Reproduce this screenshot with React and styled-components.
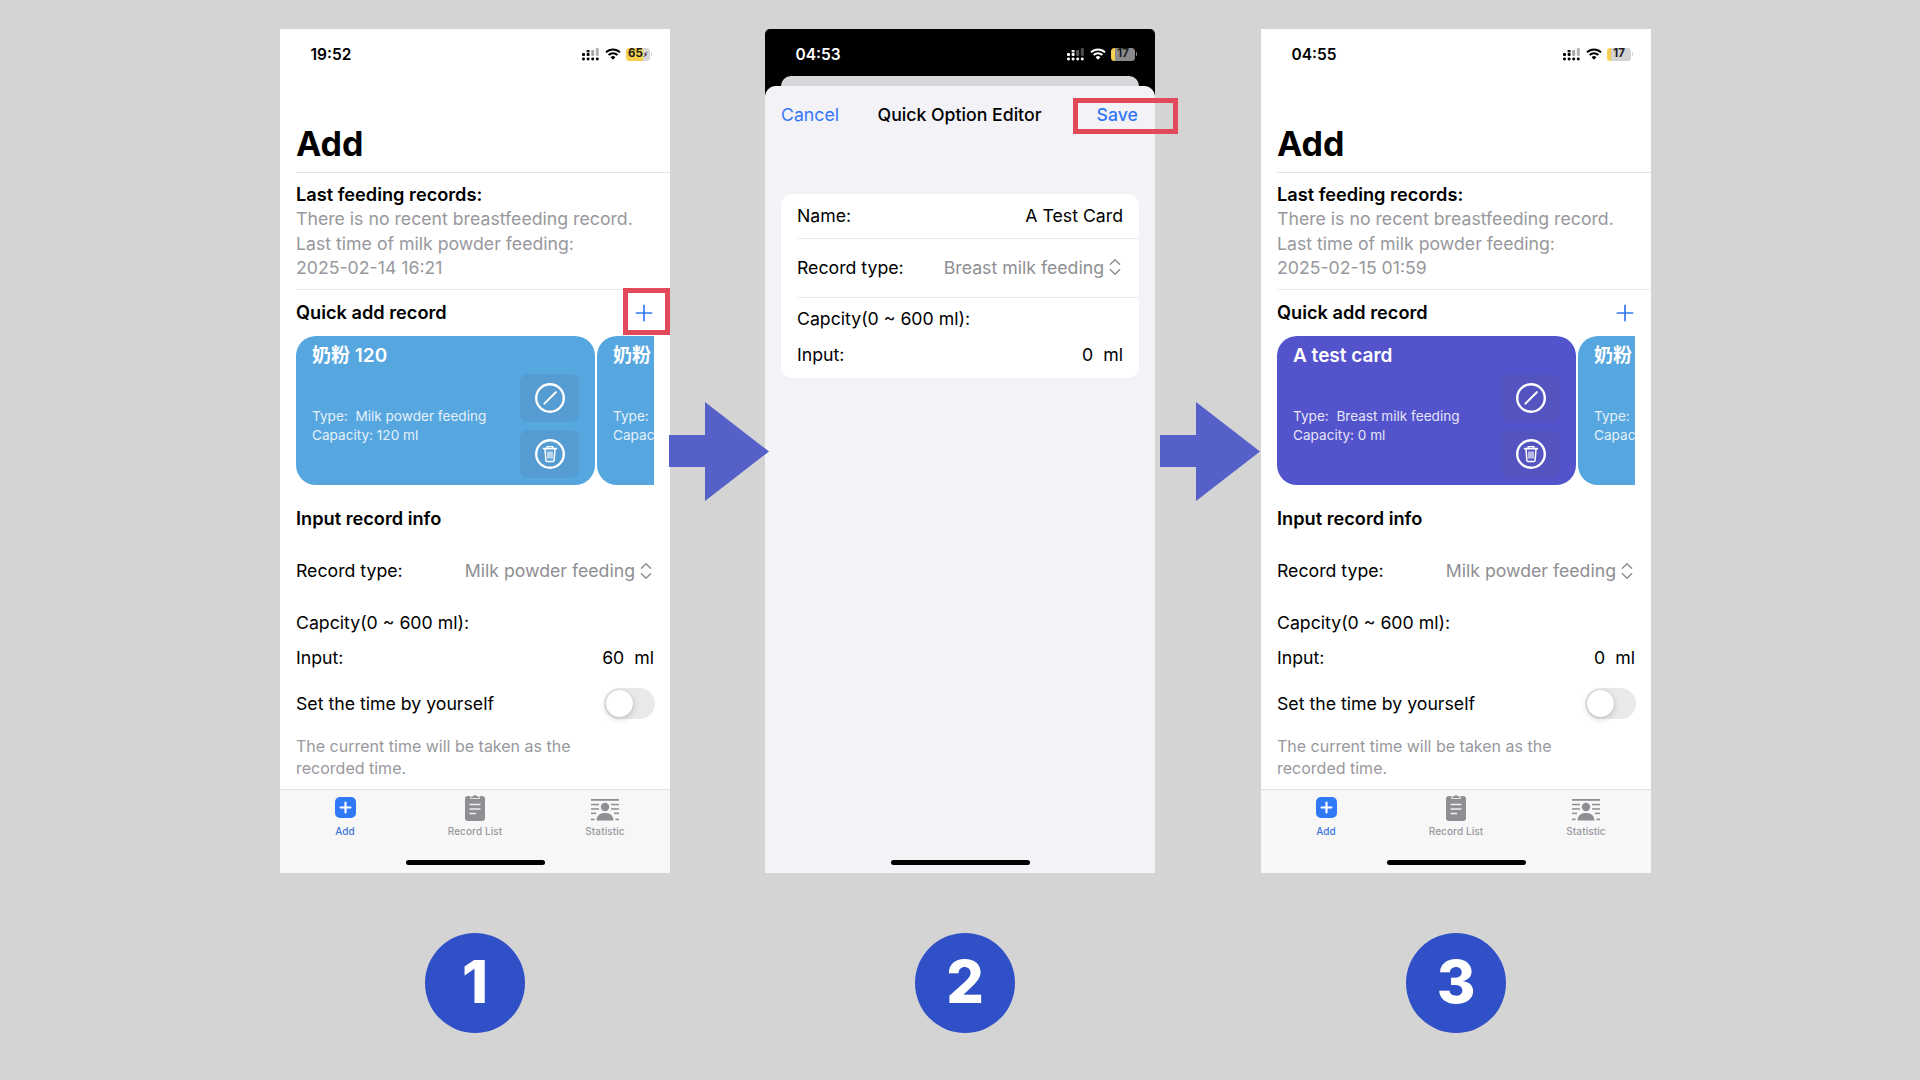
import styled, { createGlobalStyle } from 'styled-components'
import { Plus, ChevronsUpDown } from 'lucide-react'

export default function App() {
	return (
		<>
			<GlobalStyle />
			<Page>
				<Column>
					<AddScreen
						time="19:52"
						battery={{ label: '65', bolt: true, level: 72, track: '#d6d6d6' }}
						lastDate="2025-02-14 16:21"
						firstCard={{ name: '奶粉 120', type: 'Milk powder feeding', capacity: '120 ml', color: '#56a6e0' }}
						amount="60"
						highlight
					/>
					<Step>1</Step>
				</Column>
				<Gutter $width={95} $offset={-1}>
					<ArrowIcon />
				</Gutter>
				<Column>
					<EditorScreen />
					<Step $shift={10}>2</Step>
				</Column>
				<Gutter $width={106} $offset={5}>
					<ArrowIcon />
				</Gutter>
				<Column>
					<AddScreen
						time="04:55"
						battery={{ label: '17', level: 17, track: '#d2d2d2' }}
						lastDate="2025-02-15 01:59"
						firstCard={{ name: 'A test card', type: 'Breast milk feeding', capacity: '0 ml', color: '#5353cc' }}
						amount="0"
					/>
					<Step>3</Step>
				</Column>
			</Page>
		</>
	)
}

function AddScreen({ time, battery, lastDate, firstCard, amount, highlight }) {
	const secondCard = { name: '奶粉 120', type: 'Milk powder feeding', capacity: '120 ml', color: '#56a6e0' }

	return (
		<Phone>
			<StatusBar time={time} battery={battery} />
			<Content>
				<TitleBlock>
					<Title>Add</Title>
				</TitleBlock>
				<LastRecords>
					<Heading>Last feeding records:</Heading>
					<Muted>There is no recent breastfeeding record.</Muted>
					<Muted>Last time of milk powder feeding:</Muted>
					<Muted>{lastDate}</Muted>
				</LastRecords>
				<QuickHeader>
					<Heading>Quick add record</Heading>
					<AddButton>
						<Plus size={26} strokeWidth={1.6} />
					</AddButton>
					{highlight && <PlusHighlight />}
				</QuickHeader>
				<CardStrip>
					<QuickCard card={firstCard} />
					<QuickCard card={secondCard} />
				</CardStrip>
				<Row $height={42}>
					<Heading>Input record info</Heading>
				</Row>
				<Row $height={61}>
					<span>Record type:</span>
					<Picker>
						Milk powder feeding
						<ChevronsUpDown size={22} strokeWidth={1.6} />
					</Picker>
				</Row>
				<Row $height={43}>
					<span>Capcity(0 ~ 600 ml):</span>
				</Row>
				<Row $height={27}>
					<span>Input:</span>
					<Value>{amount}  ml</Value>
				</Row>
				<Row $height={64}>
					<span>Set the time by yourself</span>
					<Toggle />
				</Row>
				<Note>The current time will be taken as the recorded time.</Note>
			</Content>
			<TabBar>
				<Tabs>
					<Tab $active>
						<TabIconAdd />
						Add
					</Tab>
					<Tab>
						<TabIconList />
						Record List
					</Tab>
					<Tab>
						<TabIconStatistic />
						Statistic
					</Tab>
				</Tabs>
				<HomeBar />
			</TabBar>
		</Phone>
	)
}

function EditorScreen() {
	return (
		<Phone $dark>
			<StatusBar dark time="04:53" battery={{ label: '17', level: 17, track: '#8a8a8c' }} />
			<SheetPeek />
			<Sheet>
				<SheetHeader>
					<LinkText>Cancel</LinkText>
					<SheetTitle>Quick Option Editor</SheetTitle>
					<SaveText>Save</SaveText>
					<SaveHighlight />
				</SheetHeader>
				<FormCard>
					<FormRow $height={45} $line>
						<span>Name:</span>
						<span>A Test Card</span>
					</FormRow>
					<FormRow $height={59} $line>
						<span>Record type:</span>
						<Picker>
							Breast milk feeding
							<ChevronsUpDown size={22} strokeWidth={1.6} />
						</Picker>
					</FormRow>
					<FormRow $height={42}>
						<span>Capcity(0 ~ 600 ml):</span>
					</FormRow>
					<FormRow $height={31}>
						<span>Input:</span>
						<Value>0  ml</Value>
					</FormRow>
				</FormCard>
				<HomeBar />
			</Sheet>
		</Phone>
	)
}

function QuickCard({ card }) {
	return (
		<Card $color={card.color}>
			<CardInfo>
				<CardName>{card.name}</CardName>
				<CardMeta>
					<div>Type:  {card.type}</div>
					<div>Capacity: {card.capacity}</div>
				</CardMeta>
			</CardInfo>
			<CardActions>
				<CardAction>
					<EditIcon />
				</CardAction>
				<CardAction>
					<TrashIcon />
				</CardAction>
			</CardActions>
		</Card>
	)
}

function StatusBar({ time, battery, dark }) {
	return (
		<Status $dark={dark}>
			<Clock>{time}</Clock>
			<StatusIcons>
				<SignalIcon />
				<WifiIcon />
				<Battery $level={battery.level} $track={battery.track}>
					{battery.label}
					{battery.bolt && <Bolt>⚡︎</Bolt>}
				</Battery>
			</StatusIcons>
		</Status>
	)
}

function SignalIcon() {
	return (
		<svg width="18" height="13" viewBox="0 0 18 13" fill="currentColor">
			<rect x="0" y="5" width="3" height="3" rx="1" />
			<rect x="4.6" y="5" width="3" height="3" rx="1" />
			<rect x="4.6" y="2" width="3" height="2.4" opacity="0.9" />
			<rect x="9.2" y="2" width="3" height="6" rx="1" opacity="0.35" />
			<rect x="13.8" y="0" width="3" height="8" rx="1" opacity="0.3" />
			<rect x="0" y="9.5" width="3" height="3" rx="1.4" />
			<rect x="4.6" y="9.5" width="3" height="3" rx="1.4" />
			<rect x="9.2" y="9.5" width="3" height="3" rx="1.4" />
			<rect x="13.8" y="9.5" width="3" height="3" rx="1.4" />
		</svg>
	)
}

function WifiIcon() {
	return (
		<svg width="16" height="12" viewBox="0 0 16 12" fill="none" stroke="currentColor" strokeWidth="2">
			<path d="M1 4.4A10 10 0 0 1 15 4.4" />
			<path d="M3.6 7A6.3 6.3 0 0 1 12.4 7" />
			<path d="M8 11.8 5.6 9.2A3.4 3.4 0 0 1 10.4 9.2Z" fill="currentColor" stroke="none" />
		</svg>
	)
}

function EditIcon() {
	return (
		<svg width="32" height="32" viewBox="0 0 32 32" fill="none" stroke="#fff">
			<circle cx="16" cy="16" r="13.8" strokeWidth="2.4" />
			<path d="M10.4 21.6 20.8 11.2" strokeWidth="2" strokeLinecap="round" />
			<path d="M21.4 10.6 21.9 10.1" strokeWidth="2" strokeLinecap="round" />
		</svg>
	)
}

function TrashIcon() {
	return (
		<svg width="32" height="32" viewBox="0 0 32 32" fill="none" stroke="#fff">
			<circle cx="16" cy="16" r="13.8" strokeWidth="2.4" />
			<path d="M9.5 10.6H22.5" strokeWidth="1.6" strokeLinecap="round" />
			<path d="M13.2 10.4V8.6H18.8V10.4" strokeWidth="1.4" />
			<path d="M11 11 11.9 22.4C12 23 12.4 23.4 13 23.4H19C19.6 23.4 20 23 20.1 22.4L21 11" strokeWidth="1.5" />
			<path d="M14 13.6V20.6M16 13.6V20.6M18 13.6V20.6" strokeWidth="1.2" />
		</svg>
	)
}

function TabIconAdd() {
	return (
		<svg width="21" height="21" viewBox="0 0 21 21">
			<rect width="21" height="21" rx="5" fill="#2f78f6" />
			<path d="M10.5 5.6V15.4M5.6 10.5H15.4" stroke="#fff" strokeWidth="2.2" strokeLinecap="round" />
		</svg>
	)
}

function TabIconList() {
	return (
		<svg width="20" height="28" viewBox="0 0 20 28">
			<rect x="0" y="3" width="20" height="25" rx="3" fill="#8e8e93" />
			<path d="M5.5 5.5V3.2H7.8A2.4 2.4 0 0 1 12.2 3.2H14.5V5.5Z" fill="#8e8e93" stroke="#f7f7f8" strokeWidth="0.8" />
			<path d="M4.5 11.5H15.5M4.5 16H15.5M4.5 20.5H11" stroke="#f0f0f2" strokeWidth="1.5" />
		</svg>
	)
}

function TabIconStatistic() {
	return (
		<svg width="28" height="22" viewBox="0 0 28 22" fill="#8e8e93">
			<rect x="0" y="0" width="28" height="1.8" />
			<rect x="0" y="4.8" width="8" height="1.5" />
			<rect x="20" y="4.8" width="8" height="1.5" />
			<rect x="0" y="9.2" width="8" height="1.5" />
			<rect x="20" y="9.2" width="8" height="1.5" />
			<rect x="0" y="13.6" width="5" height="1.5" />
			<rect x="23" y="13.6" width="5" height="1.5" />
			<rect x="0" y="19.6" width="3.5" height="1.6" />
			<rect x="24.5" y="19.6" width="3.5" height="1.6" />
			<circle cx="14" cy="8" r="4.2" />
			<path d="M5.5 21.4C6 15.6 10 14 14 14C18 14 22 15.6 22.5 21.4Z" />
		</svg>
	)
}

function ArrowIcon() {
	return (
		<svg width="100" height="99" viewBox="0 0 100 99">
			<path d="M0 33H36V0L100 49.5 36 99V65H0Z" fill="#5560c9" />
		</svg>
	)
}

const GlobalStyle = createGlobalStyle`
	html, body {
		margin: 0;
		padding: 0;
		background: #d4d4d4;
	}

	body {
		font-family: Inter, 'Noto Sans CJK SC', sans-serif;
		color: #000;
	}
`

const Page = styled.div`
	display: flex;
	align-items: flex-start;
	width: 1920px;
	height: 1080px;
	box-sizing: border-box;
	padding: 29px 0 0 280px;
	overflow: hidden;
	background: #d4d4d4;
`

const Column = styled.div`
	display: flex;
	flex-direction: column;
	align-items: center;
	width: 390px;
`

const Gutter = styled.div`
	position: relative;
	z-index: 2;
	display: flex;
	align-items: flex-start;
	width: ${(p) => p.$width}px;
	padding-top: 373px;

	svg {
		flex-shrink: 0;
		margin-left: ${(p) => p.$offset}px;
	}
`

const Step = styled.div`
	display: flex;
	align-items: center;
	justify-content: center;
	box-sizing: border-box;
	width: 100px;
	height: 100px;
	margin-top: 60px;
	margin-left: ${(p) => p.$shift || 0}px;
	padding-bottom: 4px;
	border-radius: 50%;
	background: #3050c8;
	color: #fff;
	font-size: 59px;
	font-weight: 800;
	line-height: 1;
`

const Phone = styled.div`
	display: flex;
	flex-direction: column;
	width: 390px;
	height: 844px;
	background: ${(p) => (p.$dark ? '#000' : '#fff')};
	border-radius: ${(p) => (p.$dark ? '5px 5px 0 0' : '0')};
	font-size: 17.7px;
`

const Status = styled.div`
	display: flex;
	align-items: center;
	justify-content: space-between;
	flex-shrink: 0;
	box-sizing: border-box;
	height: 47px;
	padding: 3px 18px 0 30.5px;
	color: ${(p) => (p.$dark ? '#fff' : '#000')};
`

const Clock = styled.span`
	font-size: 15.5px;
	font-weight: 600;
`

const StatusIcons = styled.div`
	display: flex;
	align-items: center;
	gap: 5px;
`

const Battery = styled.div`
	position: relative;
	display: flex;
	align-items: center;
	justify-content: center;
	width: 24px;
	height: 13px;
	margin-right: 2px;
	border-radius: 3.5px;
	background: linear-gradient(to right, #f6d04d ${(p) => p.$level}%, ${(p) => p.$track} ${(p) => p.$level}%);
	color: #1c1c1e;
	font-size: 11.5px;
	font-weight: 700;
	line-height: 1;

	&::after {
		content: '';
		position: absolute;
		right: -2px;
		top: 4.5px;
		width: 1.5px;
		height: 4px;
		border-radius: 0 1px 1px 0;
		background: ${(p) => p.$track};
	}
`

const Bolt = styled.span`
	font-size: 7px;
`

const Content = styled.div`
	display: flex;
	flex-direction: column;
	flex: 1;
	min-height: 0;
`

const TitleBlock = styled.div`
	display: flex;
	align-items: flex-end;
	box-sizing: border-box;
	height: 97px;
	margin-left: 16px;
	padding-bottom: 8px;
	border-bottom: 1px solid #e4e4e6;
`

const Title = styled.h1`
	margin: 0;
	font-size: 34px;
	font-weight: 700;
	line-height: 41px;
`

const LastRecords = styled.div`
	box-sizing: border-box;
	height: 117px;
	margin-left: 16px;
	padding-top: 10px;
	border-bottom: 1px solid #e9e9eb;
	line-height: 24.4px;
`

const Heading = styled.div`
	margin: -1px 0 1px;
	font-size: 18.2px;
	font-weight: 600;
`

const Muted = styled.div`
	color: #98989d;
`

const QuickHeader = styled.div`
	position: relative;
	display: flex;
	align-items: center;
	justify-content: space-between;
	height: 46px;
	padding: 0 13px 0 16px;
`

const AddButton = styled.div`
	display: flex;
	color: #3478f6;
`

const PlusHighlight = styled.div`
	position: absolute;
	top: -2px;
	right: 0;
	box-sizing: border-box;
	width: 47px;
	height: 47px;
	border: 5px solid #e2495b;
`

const CardStrip = styled.div`
	display: flex;
	gap: 2px;
	margin: 0 16px 13px 16px;
	overflow: hidden;
`

const Card = styled.div`
	display: flex;
	justify-content: space-between;
	flex-shrink: 0;
	box-sizing: border-box;
	width: 299px;
	height: 149px;
	padding: 0 16px;
	border-radius: 20px;
	background: ${(p) => p.$color};
	color: #fff;
`

const CardInfo = styled.div`
	padding-top: 8px;
`

const CardName = styled.div`
	font-size: 19px;
	font-weight: 600;
	line-height: 24px;
	white-space: nowrap;
`

const CardMeta = styled.div`
	margin-top: 39px;
	font-size: 13.6px;
	line-height: 19px;
	white-space: pre;
	opacity: 0.85;
`

const CardActions = styled.div`
	display: flex;
	flex-direction: column;
	gap: 8px;
	flex-shrink: 0;
	padding-top: 38px;
`

const CardAction = styled.div`
	display: flex;
	align-items: center;
	justify-content: center;
	width: 59px;
	height: 48px;
	border-radius: 8px;
	background: rgba(85, 95, 115, 0.13);
`

const Row = styled.div`
	display: flex;
	align-items: center;
	justify-content: space-between;
	flex-shrink: 0;
	height: ${(p) => p.$height}px;
	padding: 0 16px;
`

const Picker = styled.span`
	display: flex;
	align-items: center;
	color: #8e8e93;

	svg {
		margin-right: -3px;
	}
`

const Value = styled.span`
	white-space: pre;
`

const Toggle = styled.div`
	position: relative;
	width: 51px;
	height: 31px;
	margin-right: -1px;
	border-radius: 16px;
	background: #e9e9ea;

	&::before {
		content: '';
		position: absolute;
		top: 2px;
		left: 2px;
		width: 27px;
		height: 27px;
		border-radius: 50%;
		background: #fff;
		box-shadow: 0 2px 6px rgba(0, 0, 0, 0.18), 0 0 1px rgba(0, 0, 0, 0.2);
	}
`

const Note = styled.div`
	width: 300px;
	padding-left: 16px;
	color: #98989d;
	font-size: 16px;
	line-height: 22px;
`

const TabBar = styled.div`
	display: flex;
	flex-direction: column;
	flex-shrink: 0;
	box-sizing: border-box;
	height: 84px;
	border-top: 1px solid #e2e2e4;
	background: #f7f7f8;
`

const Tabs = styled.div`
	display: grid;
	grid-template-columns: repeat(3, 1fr);
`

const Tab = styled.div`
	display: flex;
	flex-direction: column;
	align-items: center;
	justify-content: flex-end;
	height: 47px;
	color: ${(p) => (p.$active ? '#3a76d8' : '#98989d')};
	font-size: 10px;
	font-weight: 500;
	line-height: 12px;
	letter-spacing: 0.1px;

	svg {
		margin-bottom: ${(p) => (p.$active ? '7px' : '4px')};
	}
`

const HomeBar = styled.div`
	flex-shrink: 0;
	width: 139px;
	height: 5px;
	margin: auto auto 8px;
	border-radius: 3px;
	background: #000;
`

const SheetPeek = styled.div`
	flex-shrink: 0;
	height: 10px;
	margin: 0 16px;
	border-radius: 11px 11px 0 0;
	background: #d8d8dc;
`

const Sheet = styled.div`
	display: flex;
	flex-direction: column;
	flex: 1;
	border-radius: 11px 11px 0 0;
	background: #f2f2f7;
`

const SheetHeader = styled.div`
	position: relative;
	display: grid;
	grid-template-columns: 1fr auto 1fr;
	align-items: center;
	height: 56px;
	padding: 0 17px 0 16px;
`

const LinkText = styled.span`
	color: #3478f6;
`

const SaveText = styled(LinkText)`
	justify-self: end;
	font-weight: 500;
`

const SheetTitle = styled.span`
	font-weight: 500;
`

const SaveHighlight = styled.div`
	position: absolute;
	top: 12px;
	right: -23px;
	box-sizing: border-box;
	width: 105px;
	height: 36px;
	border: 5px solid #e2495b;
`

const FormCard = styled.div`
	margin: 52px 16px 0;
	padding-bottom: 7px;
	border-radius: 11px;
	background: #fff;
`

const FormRow = styled.div`
	display: flex;
	align-items: center;
	justify-content: space-between;
	box-sizing: border-box;
	height: ${(p) => p.$height}px;
	margin-left: 16px;
	padding: 0 16px 2px 0;
	border-bottom: ${(p) => (p.$line ? '1px solid #e9e9eb' : 'none')};
`
